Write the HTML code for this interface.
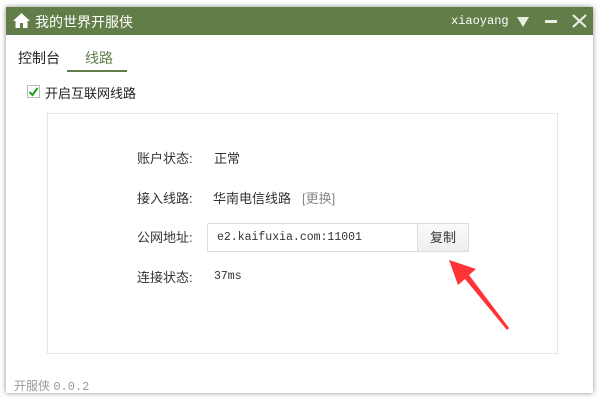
<!DOCTYPE html><html><head><meta charset="utf-8"><style>
body{margin:0;width:600px;height:400px;background:#fff;position:relative;overflow:hidden;font-family:"Liberation Sans","Noto Sans CJK SC",sans-serif;font-size:13px;color:#333}
.win{position:absolute;left:6px;top:7px;width:587px;height:386px;background:#fff;box-shadow:0 0 5px rgba(0,0,0,.45)}
.tb{position:absolute;left:0;top:0;width:587px;height:28px;background:#627d48;color:#fff}
.a{position:absolute;white-space:nowrap}
.mono{font-family:"Liberation Mono","Noto Sans CJK SC",monospace}
</style></head><body>
<div class="win">
<div class="tb">
<svg class="a" style="left:6px;top:5px" width="19" height="17" viewBox="0 0 19 17"><path d="M9.5 1L1 9h2.5v7h4.5v-5h3v5h4.5V9H18z" fill="#fff"/></svg>
<div class="a" style="left:29px;top:5px;font-size:14px">我的世界开服侠</div>
<div class="a mono" style="left:445px;top:7px;font-size:12px">xiaoyang</div>
<svg class="a" style="left:510px;top:9px" width="14" height="12"><path d="M1 1h12L7 11z" fill="#e8ede2"/></svg>
<div class="a" style="left:539px;top:13px;width:12px;height:3px;background:#e8ede2"></div>
<svg class="a" style="left:566px;top:7px" width="15" height="14"><path d="M1 1L14 13M14 1L1 13" stroke="#e8ede2" stroke-width="2.2"/></svg>
</div>
<div class="a" style="left:12px;top:41px;font-size:14px;color:#222">控制台</div>
<div class="a" style="left:79px;top:41px;font-size:14px;color:#627d48">线路</div>
<div class="a" style="left:61px;top:63px;width:60px;height:2px;background:#627d48"></div>
<div class="a" style="left:21px;top:78px;width:11px;height:11px;border:1px solid #bbb"></div>
<svg class="a" style="left:22px;top:80px" width="11" height="10"><path d="M1.5 5l3 3 5-7" stroke="#1aa31a" stroke-width="2" fill="none"/></svg>
<div class="a" style="left:39px;top:76px;color:#222">开启互联网线路</div>
<div class="a" style="left:41px;top:106px;width:509px;height:239px;border:1px solid #e6e6e6"></div>
<div class="a" style="left:131px;top:141px">账户状态:</div>
<div class="a" style="left:208px;top:141px">正常</div>
<div class="a" style="left:131px;top:181px">接入线路:</div>
<div class="a" style="left:207px;top:181px">华南电信线路</div>
<div class="a" style="left:296px;top:181px;color:#888">[更换]</div>
<div class="a" style="left:131px;top:220px">公网地址:</div>
<div class="a" style="left:201px;top:216px;width:260px;height:27px;border:1px solid #ddd;border-radius:2px"></div>
<div class="a mono" style="left:211px;top:224px;font-size:11.5px">e2.kaifuxia.com:11001</div>
<div class="a" style="left:411px;top:216px;width:50px;height:27px;border:1px solid #ddd;background:linear-gradient(#fafafa,#eee);text-align:center;line-height:27px">复制</div>
<div class="a" style="left:131px;top:260px">连接状态:</div>
<div class="a mono" style="left:208px;top:263px;font-size:11.5px">37ms</div>
<svg class="a" style="left:430px;top:250px" width="80" height="75"><path d="M13 3L40 12 33 18 73 71 71 73 29 22 22 28z" fill="#f33"/></svg>
<div class="a" style="left:8px;top:370px;color:#999;font-size:12px">开服侠 <span class="mono">0.0.2</span></div>
</div>
</body></html>
